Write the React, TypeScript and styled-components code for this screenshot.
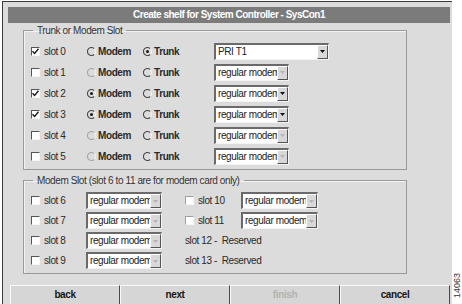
import React from 'react';
import styled, { createGlobalStyle } from 'styled-components';

const GlobalStyle = createGlobalStyle`
  html, body {
    margin: 0;
    padding: 0;
    background: #ffffff;
  }
  body {
    font-family: "Liberation Sans", Arial, sans-serif;
    font-size: 10px;
    letter-spacing: -0.4px;
    color: #2a2a2a;
  }
`;

type TrunkRow = {
  slot: number;
  checked: boolean;
  modem: 'on' | 'off' | 'dim';
  trunk: boolean;
  select: string;
  selectWidth: number;
  selectEnabled: boolean;
};

const trunkRows: TrunkRow[] = [
  { slot: 0, checked: true, modem: 'off', trunk: true, select: 'PRI T1', selectWidth: 115, selectEnabled: true },
  { slot: 1, checked: false, modem: 'dim', trunk: false, select: 'regular modem', selectWidth: 75, selectEnabled: false },
  { slot: 2, checked: true, modem: 'on', trunk: false, select: 'regular modem', selectWidth: 75, selectEnabled: true },
  { slot: 3, checked: true, modem: 'on', trunk: false, select: 'regular modem', selectWidth: 75, selectEnabled: true },
  { slot: 4, checked: false, modem: 'dim', trunk: false, select: 'regular modem', selectWidth: 75, selectEnabled: false },
  { slot: 5, checked: false, modem: 'dim', trunk: false, select: 'regular modem', selectWidth: 75, selectEnabled: false },
];

const modemRows = [
  { left: 6, right: 10 },
  { left: 7, right: 11 },
  { left: 8, right: 12 },
  { left: 9, right: 13 },
];

const CheckBox: React.FC<{ checked?: boolean; dim?: boolean }> = ({ checked, dim }) => (
  <Box $dim={dim}>
    {checked && (
      <svg width="7" height="7" viewBox="0 0 7 7">
        <path d="M0.5 3.2 L2.6 5.4 L6.5 0.8" fill="none" stroke="#1a1a1a" strokeWidth="1.4" />
      </svg>
    )}
  </Box>
);

const Radio: React.FC<{ checked?: boolean; dim?: boolean }> = ({ checked, dim }) => (
  <RadioIcon width="9" height="9" viewBox="0 0 9 9">
    <path d="M7.3 1.7 A4 4 0 1 0 7.3 7.3" fill="none" stroke={dim ? '#a8a8a8' : '#4a4a4a'} strokeWidth="1.1" />
    <path d="M7.3 1.7 A4 4 0 0 1 7.3 7.3" fill="none" stroke="#f4f4f4" strokeWidth="1.1" />
    {checked && <circle cx="4.5" cy="4.5" r="1.5" fill="#1a1a1a" />}
  </RadioIcon>
);

const Select: React.FC<{ value: string; width: number; enabled?: boolean }> = ({ value, width, enabled }) => (
  <SelectBox $width={width}>
    <SelectText>{value}</SelectText>
    <ArrowButton>
      <svg width="5" height="3" viewBox="0 0 5 3">
        <path d="M0 0 H5 L2.5 3 Z" fill={enabled ? '#111' : '#b4b4b4'} />
      </svg>
    </ArrowButton>
  </SelectBox>
);

const App: React.FC = () => {
  return (
    <Frame>
      <GlobalStyle />
      <Panel>
        <TitleBar>Create shelf for System Controller - SysCon1</TitleBar>
        <Group>
          <Legend>Trunk or Modem Slot</Legend>
          {trunkRows.map((row) => (
            <TrunkLine key={row.slot}>
              <Option>
                <CheckBox checked={row.checked} />
                <Label>slot {row.slot}</Label>
              </Option>
              <Option>
                <Radio checked={row.modem === 'on'} dim={row.modem === 'dim'} />
                <Label $bold>Modem</Label>
              </Option>
              <Option>
                <Radio checked={row.trunk} />
                <Label $bold>Trunk</Label>
              </Option>
              <Select value={row.select} width={row.selectWidth} enabled={row.selectEnabled} />
            </TrunkLine>
          ))}
        </Group>
        <Group $gap={4}>
          <Legend>Modem Slot (slot 6 to 11 are for modem card only)</Legend>
          {modemRows.map((row) => (
            <ModemLine key={row.left}>
              <Option>
                <CheckBox />
                <Label>slot {row.left}</Label>
              </Option>
              <Select value="regular modem" width={76} />
              {row.right <= 11 ? (
                <>
                  <Option>
                    <CheckBox dim />
                    <Label>slot {row.right}</Label>
                  </Option>
                  <Select value="regular modem" width={77} />
                </>
              ) : (
                <Reserved>slot {row.right} -&nbsp; Reserved</Reserved>
              )}
            </ModemLine>
          ))}
        </Group>
        <ButtonBar>
          <NavButton>back</NavButton>
          <NavButton>next</NavButton>
          <NavButton disabled>finish</NavButton>
          <NavButton>cancel</NavButton>
        </ButtonBar>
      </Panel>
      <Side>
        <FigureId>14063</FigureId>
      </Side>
    </Frame>
  );
};

const Frame = styled.div`
  display: flex;
  height: 304px;
  padding: 1px 0 0 2px;
  box-sizing: border-box;
  overflow: hidden;
`;

const Panel = styled.div`
  width: 450px;
  display: flex;
  flex-direction: column;
  background: #dcdcdc;
  border-top: 1px solid #3a3a3a;
  border-left: 1px solid #3a3a3a;
  padding: 5px 2px 0 5px;
  box-sizing: border-box;
`;

const TitleBar = styled.div`
  height: 16px;
  line-height: 15px;
  background: #7b7b7b;
  color: #ffffff;
  font-weight: bold;
  letter-spacing: -0.5px;
  text-align: center;
`;

const Group = styled.fieldset<{ $gap?: number }>`
  width: 384px;
  margin: ${(p) => p.$gap ?? 1}px 0 0 15px;
  padding: 4px 0 2px 7px;
  border: 1px solid #9a9a9a;
  box-shadow: inset 1px 1px 0 #f2f2f2;
  box-sizing: border-box;
  min-width: 0;
`;

const Legend = styled.legend`
  margin-left: 2px;
  padding: 0 4px;
  line-height: 13px;
  color: #333;
`;

const TrunkLine = styled.div`
  display: grid;
  grid-template-columns: 56px 56px 71px auto;
  align-items: center;
  height: 21px;
`;

const ModemLine = styled.div`
  display: grid;
  grid-template-columns: 55px 99px 56px auto;
  align-items: center;
  height: 20px;
`;

const Option = styled.div`
  display: flex;
  align-items: center;
`;

const Label = styled.span<{ $bold?: boolean }>`
  margin-left: ${(p) => (p.$bold ? 2 : 4)}px;
  font-weight: ${(p) => (p.$bold ? 'bold' : 'normal')};
  white-space: nowrap;
`;

const Box = styled.span<{ $dim?: boolean }>`
  display: inline-flex;
  align-items: center;
  justify-content: center;
  width: 9px;
  height: 9px;
  box-sizing: border-box;
  background: #ffffff;
  border: 1px solid;
  border-color: ${(p) => (p.$dim ? '#a0a0a0' : '#555')} #f6f6f6 #f6f6f6 ${(p) => (p.$dim ? '#a0a0a0' : '#555')};
`;

const RadioIcon = styled.svg`
  display: block;
  flex: none;
`;

const SelectBox = styled.div<{ $width: number }>`
  display: flex;
  width: ${(p) => p.$width}px;
  height: 17px;
  box-sizing: border-box;
  background: #ffffff;
  border-style: solid;
  border-width: 2px 1px 1px 2px;
  border-color: #6a6a6a #f4f4f4 #f4f4f4 #6a6a6a;
`;

const SelectText = styled.span`
  flex: 1;
  overflow: hidden;
  white-space: nowrap;
  padding-left: 2px;
  line-height: 14px;
  color: #222;
`;

const ArrowButton = styled.span`
  display: flex;
  align-items: center;
  justify-content: center;
  width: 11px;
  flex: none;
  background: #d8d8d8;
  border: 1px solid;
  border-color: #ffffff #555 #555 #ffffff;
  box-sizing: border-box;
`;

const Reserved = styled.span`
  grid-column: 3 / 5;
  white-space: nowrap;
`;

const ButtonBar = styled.div`
  display: grid;
  grid-template-columns: repeat(4, 1fr);
  margin: 11px 0 0 2px;
  height: 20px;
`;

const NavButton = styled.div<{ disabled?: boolean }>`
  display: flex;
  align-items: center;
  justify-content: center;
  background: #d6d6d6;
  border-top: 1px solid #fafafa;
  border-left: 1px solid #fafafa;
  border-right: 1px solid #4a4a4a;
  font-weight: bold;
  color: ${(p) => (p.disabled ? '#b2b2b2' : '#151515')};
`;

const Side = styled.div`
  flex: 1;
  display: flex;
  align-items: flex-end;
  justify-content: center;
  padding-bottom: 6px;
`;

const FigureId = styled.span`
  writing-mode: vertical-rl;
  transform: rotate(180deg);
  font-size: 9px;
  letter-spacing: 0;
  color: #333;
`;

export default App;
